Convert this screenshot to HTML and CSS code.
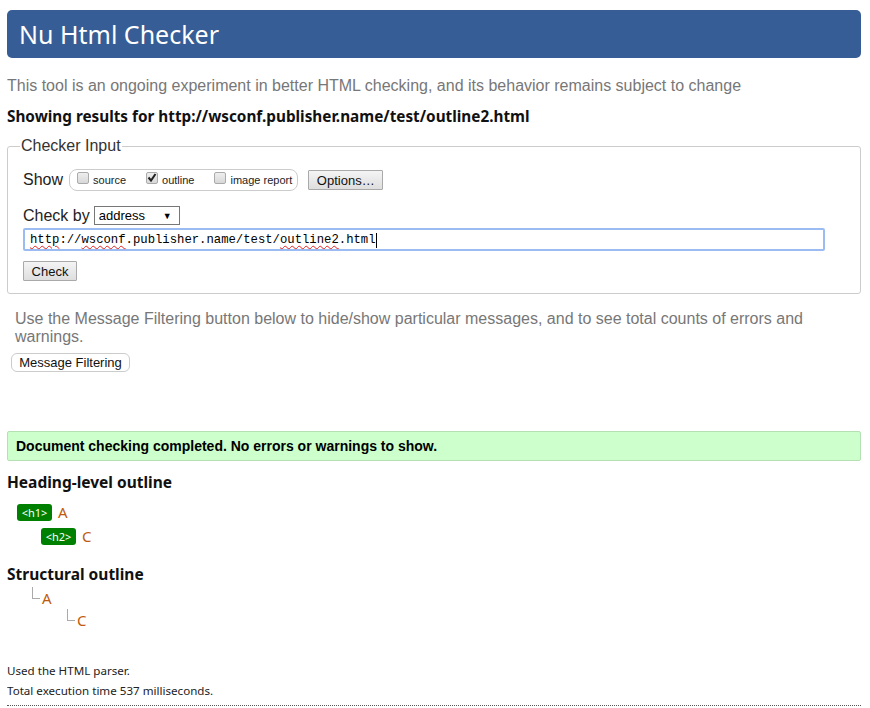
FILE: index.html
```html
<!DOCTYPE html>
<html lang="en">
<head>
<meta charset="utf-8">
<title>Nu Html Checker</title>
<link rel="stylesheet" href="styles.css">
</head>
<body>
<header class="banner"><h1 class="banner-title">Nu Html Checker</h1></header>
<p class="intro">This tool is an ongoing experiment in better HTML checking, and its behavior remains subject to change</p>
<p class="showing">Showing results for http://wsconf.publisher.name/test/outline2.html</p>

<fieldset class="checker">
  <legend class="legend">Checker Input</legend>
  <div class="row show-row">
    <span class="row-label">Show</span>
    <div class="cb-group">
      <label class="cb-item"><span class="cb"></span>source</label>
      <label class="cb-item"><span class="cb"><svg viewBox="0 0 12 12" width="12" height="12"><path d="M2.5 5.5 L5 8.5 L9.5 2" fill="none" stroke="#222" stroke-width="2"/></svg></span>outline</label>
      <label class="cb-item"><span class="cb"></span>image report</label>
    </div>
    <button class="btn btn-options" type="button">Options…</button>
  </div>
  <div class="row checkby-row">
    <span class="row-label">Check by</span>
    <div class="select"><span>address</span><span class="arrow">▼</span></div>
  </div>
  <div class="url-input"><span class="sp">http</span>://<span class="sp">wsconf</span>.publisher.name/test/<span class="sp">outline2</span>.html<span class="caret"></span></div>
  <button class="btn btn-check" type="button">Check</button>
</fieldset>

<p class="filter-note">Use the Message Filtering button below to hide/show particular messages, and to see total counts of errors and warnings.</p>
<button class="btn-filter" type="button">Message Filtering</button>

<div class="success">Document checking completed. No errors or warnings to show.</div>

<h2 class="section-title">Heading-level outline</h2>
<ul class="heading-outline">
  <li class="ho-item lvl1"><span class="badge">&lt;h1&gt;</span><span class="ho-text">A</span></li>
  <li class="ho-item lvl2"><span class="badge">&lt;h2&gt;</span><span class="ho-text">C</span></li>
</ul>

<h2 class="section-title structural">Structural outline</h2>
<ul class="struct-outline">
  <li class="so-item">
    <span class="so-text">A</span>
    <ul class="struct-outline nested">
      <li class="so-item"><span class="so-text">C</span></li>
    </ul>
  </li>
</ul>

<div class="stats">
  <p>Used the HTML parser.</p>
  <p>Total execution time 537 milliseconds.</p>
</div>
<div class="rule"></div>
</body>
</html>
```
FILE: styles.css
```css
html, body { background: #fff; }
body {
  margin: 10px 9px 0 7px;
  font-family: "Liberation Sans", Arial, sans-serif;
  color: #000;
}
.banner {
  background: #365d95;
  border-radius: 5px;
  height: 48px;
  display: flex;
  align-items: center;
  padding-left: 12px;
}
.banner-title {
  margin: 0;
  font-family: "Noto Sans", "Open Sans", sans-serif;
  font-weight: 400;
  font-size: 25px;
  color: #fff;
  line-height: 1;
}
.intro {
  margin: 19px 0 0;
  font-size: 16px;
  line-height: 18px;
  color: #777;
}
.showing {
  margin: 11px 0 0;
  font-family: "Noto Sans", "Open Sans", sans-serif;
  font-weight: 700;
  font-size: 15.3px;
  line-height: 20px;
  color: #111;
}
.checker {
  margin: 11px 0 0;
  border: 1px solid #ccc;
  border-radius: 3px;
  padding: 14px 15px 12px;
  min-width: 0;
}
.legend {
  margin-left: -3px;
  padding: 0 1px;
  font-size: 16px;
  color: #333;
}
.row { display: flex; align-items: center; }
.row-label { font-size: 16px; color: #222; }
.cb-group {
  display: flex;
  align-items: center;
  margin-left: 6px;
  border: 1px solid #ccc;
  border-radius: 8px;
  height: 20px;
  padding: 0 5px 0 7px;
}
.cb-item {
  display: flex;
  align-items: center;
  font-size: 11px;
  color: #222;
  margin-right: 20px;
}
.cb-item:last-child { margin-right: 0; }
.cb {
  width: 10px;
  height: 10px;
  border: 1px solid #aaa;
  border-radius: 2px;
  background: linear-gradient(#eee, #d8d8d8);
  margin-right: 4px;
  position: relative;
  top: -2px;
  display: flex;
  align-items: center;
  justify-content: center;
  overflow: hidden;
}
.cb svg { display: block; flex: none; }
.btn {
  font-family: "Liberation Sans", Arial, sans-serif;
  font-size: 13px;
  color: #111;
  background: linear-gradient(#f4f4f4, #dedede);
  border: 1px solid #a9a9a9;
  border-radius: 1px;
  height: 20px;
  padding: 0 6px;
}
.btn-options { margin-left: 10px; width: 75px; }
.checkby-row { margin-top: 15px; }
.select {
  margin-left: 4px;
  border: 1px solid #777;
  display: flex;
  align-items: center;
  justify-content: space-between;
  padding: 0 7px 0 4px;
  box-sizing: border-box;
  width: 86px;
  height: 19px;
  font-size: 13px;
}
.select .arrow { font-size: 9px; }
.url-input {
  margin-top: 3px;
  height: 23px;
  box-sizing: border-box;
  border: 2px solid #9bbcf3;
  border-radius: 2px;
  padding: 1px 0 0 5px;
  font-family: "Liberation Mono", "Courier New", monospace;
  font-size: 12.25px;
  line-height: 17px;
  width: 802px;
  display: flex;
  align-items: center;
  white-space: pre;
}
.sp { text-decoration: underline wavy #e02020; text-decoration-thickness: 1px; text-underline-offset: 2px; }
.caret { display: inline-block; width: 1px; height: 15px; background: #000; }
.btn-check { margin-top: 10px; width: 54px; padding: 0; }
.filter-note {
  margin: 16px 0 0 8px;
  font-size: 16px;
  line-height: 18px;
  color: #777;
}
.btn-filter {
  display: block;
  margin: 7px 0 0 4px;
  font-family: "Liberation Sans", Arial, sans-serif;
  font-size: 13px;
  color: #111;
  background: #fff;
  border: 1px solid #ccc;
  border-radius: 6px;
  height: 19px;
  width: 119px;
  padding: 0;
}
.success {
  margin-top: 59px;
  background: #ccffcc;
  border: 1px solid #b4e0b4;
  border-radius: 2px;
  height: 30px;
  box-sizing: border-box;
  padding-left: 8px;
  display: flex;
  align-items: center;
  font-weight: 700;
  font-size: 14px;
}
.section-title {
  margin: 11px 0 0;
  font-family: "Noto Sans", "Open Sans", sans-serif;
  font-weight: 700;
  font-size: 15.5px;
  line-height: 20px;
  color: #111;
}
.heading-outline { list-style: none; margin: 8px 0 0; padding: 0; }
.ho-item { display: flex; align-items: center; height: 24px; }
.lvl1 { padding-left: 10px; }
.lvl2 { padding-left: 34px; }
.badge {
  background: #008000;
  color: #fff;
  font-family: "Noto Sans", "Open Sans", sans-serif;
  font-size: 11px;
  border-radius: 3px;
  width: 35px;
  height: 17px;
  display: flex;
  align-items: center;
  justify-content: center;
}
.ho-text {
  margin-left: 6px;
  font-family: "Noto Sans", "Open Sans", sans-serif;
  font-size: 15px;
  color: #c05a0c;
}
.section-title.structural { margin-top: 16px; }
.struct-outline { list-style: none; margin: 2px 0 0; padding: 0 0 0 25px; }
.struct-outline.nested { margin: 0; padding-left: 25px; }
.so-item { position: relative; padding-left: 10px; }
.so-item::before {
  content: "";
  position: absolute;
  left: 0;
  top: 1px;
  width: 7px;
  height: 11px;
  border-left: 1px solid #aaa;
  border-bottom: 1px solid #aaa;
}
.so-text {
  display: block;
  font-family: "Noto Sans", "Open Sans", sans-serif;
  font-size: 15px;
  line-height: 20px;
  padding-top: 2px;
  color: #c05a0c;
}
.stats { margin-top: 31px; font-family: "Noto Sans", "Open Sans", sans-serif; font-size: 11.6px; color: #222; }
.stats p { margin: 0; line-height: 20px; }
.rule { margin-top: 4px; border-top: 1px dotted #555; }
```
